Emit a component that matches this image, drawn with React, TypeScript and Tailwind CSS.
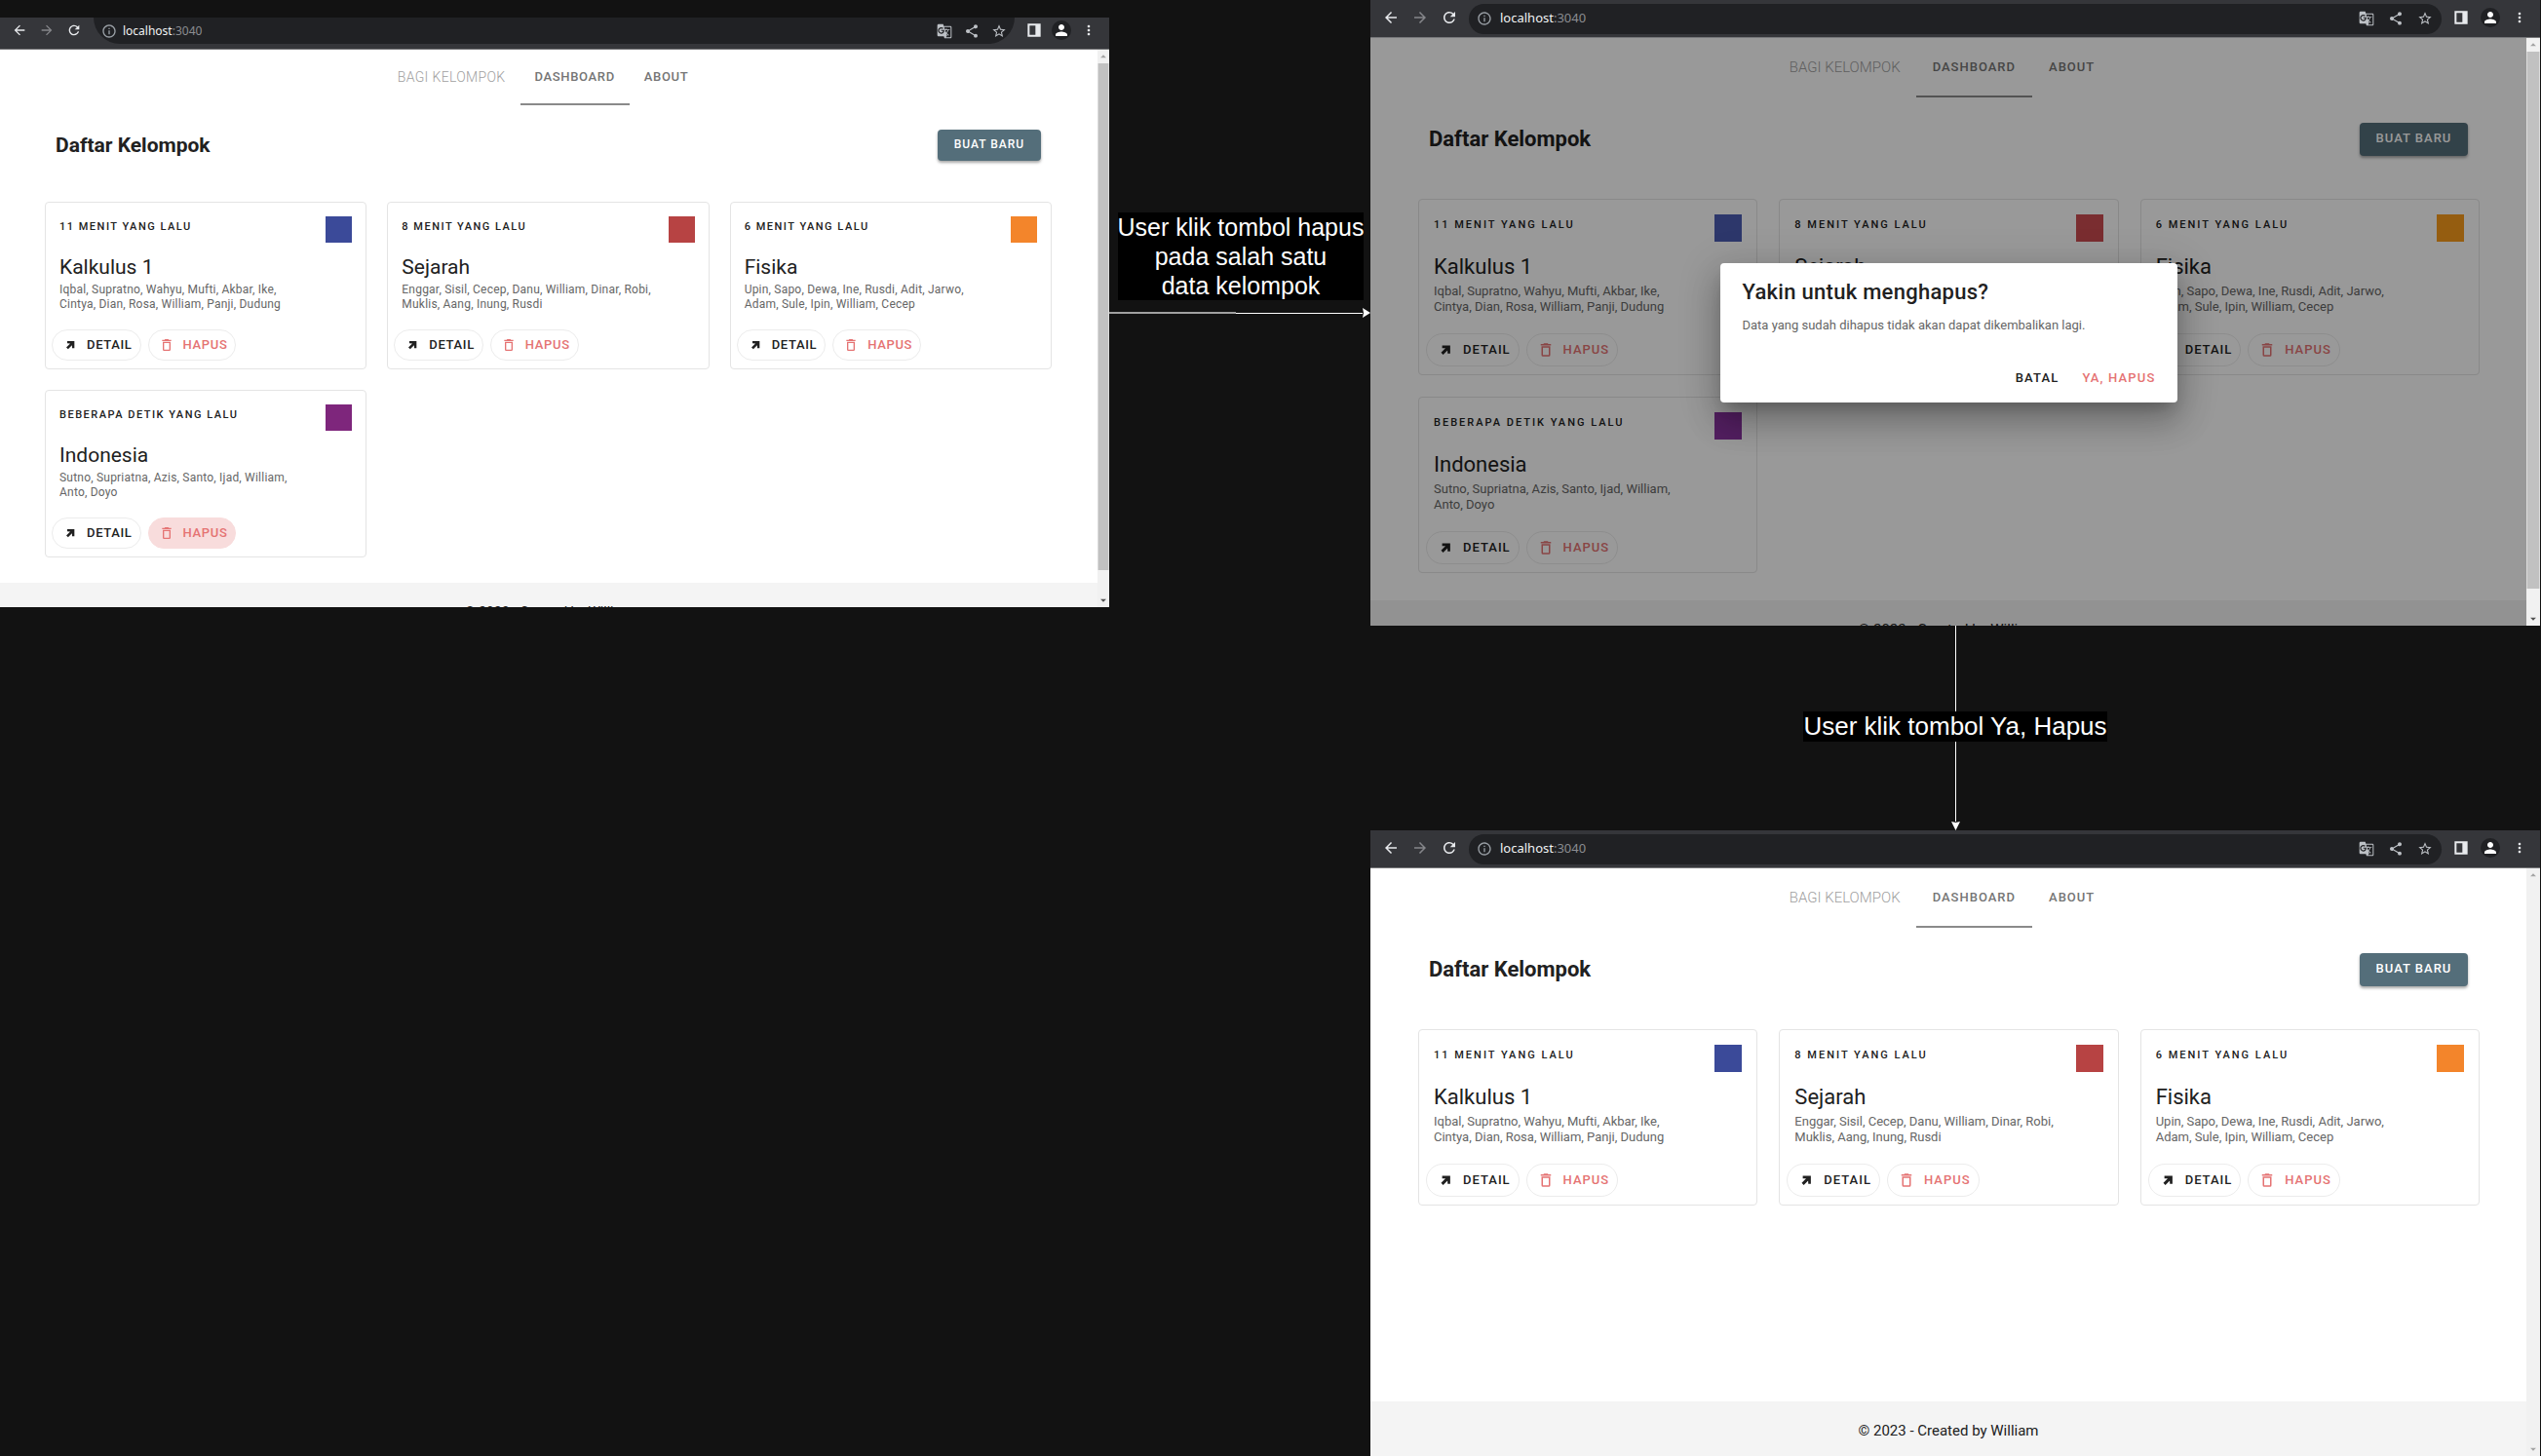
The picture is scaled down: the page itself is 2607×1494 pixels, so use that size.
import React from "react";
import {
  MdArrowBack,
  MdArrowForward,
  MdRefresh,
  MdInfoOutline,
  MdGTranslate,
  MdShare,
  MdStarBorder,
  MdPerson,
  MdMoreVert,
  MdArrowDropUp,
  MdArrowDropDown,
} from "react-icons/md";

type Size = "sm" | "lg";

type Group = {
  time: string;
  name: string;
  members: string[];
  swatch: string;
  dimSwatch: string;
};

const groups: Group[] = [
  {
    time: "11 MENIT YANG LALU",
    name: "Kalkulus 1",
    members: ["Iqbal, Supratno, Wahyu, Mufti, Akbar, Ike,", "Cintya, Dian, Rosa, William, Panji, Dudung"],
    swatch: "bg-[#3b4a99]",
    dimSwatch: "bg-[#4b5cb2]",
  },
  {
    time: "8 MENIT YANG LALU",
    name: "Sejarah",
    members: ["Enggar, Sisil, Cecep, Danu, William, Dinar, Robi,", "Muklis, Aang, Inung, Rusdi"],
    swatch: "bg-[#b74343]",
    dimSwatch: "bg-[#cb4b50]",
  },
  {
    time: "6 MENIT YANG LALU",
    name: "Fisika",
    members: ["Upin, Sapo, Dewa, Ine, Rusdi, Adit, Jarwo,", "Adam, Sule, Ipin, William, Cecep"],
    swatch: "bg-[#f3852b]",
    dimSwatch: "bg-[#f89b1b]",
  },
  {
    time: "BEBERAPA DETIK YANG LALU",
    name: "Indonesia",
    members: ["Sutno, Supriatna, Azis, Santo, Ijad, William,", "Anto, Doyo"],
    swatch: "bg-[#7e267c]",
    dimSwatch: "bg-[#8a34a2]",
  },
];

const styles = {
  sm: {
    toolbar: "h-[33px] pb-[5px]",
    navGroup: "w-24 gap-3 pl-3",
    navIcon: "size-4",
    pill: "h-[27px] rounded-b-full rounded-t-xl pl-2 pr-2",
    url: "ml-[6px] text-[12px]",
    pillIcons: "gap-3",
    tools: "pl-3 pr-[13px] gap-[10px]",
    scroll: "w-3",
    tabs: "h-[57px] pr-3",
    tabDisabled: "text-[14px] px-[15px] tracking-wide",
    tab: "text-[13px] px-[15px] tracking-wider",
    head: "pl-[57px] pr-[58px] pt-[25px] pb-[42px]",
    title: "text-[21px] leading-8",
    create: "h-8 w-[106px] text-[12px]",
    grid: "pl-[46px] pr-[47px] gap-[21px]",
    card: "h-[172px] px-[14px]",
    swatch: "mt-[14px] size-[27px]",
    time: "text-[11px] leading-[50px] tracking-[1.5px]",
    name: "text-[21px] leading-8",
    members: "text-[12px] leading-[15px] tracking-[0.0178em]",
    actions: "-ml-2 mt-[18px] gap-[7px]",
    action: "h-8 pl-[10px] pr-2 text-[13px] gap-[9px] tracking-wider",
    actionIcon: "size-4",
    footer: "mt-[26px] pt-2 text-[14px] h-[52px]",
  },
  lg: {
    toolbar: "h-[39px]",
    navGroup: "w-[101px] gap-3 pl-3",
    navIcon: "size-[18px]",
    pill: "h-[31px] rounded-full pl-2 pr-[9px]",
    url: "ml-2 text-[13px]",
    pillIcons: "gap-[14px]",
    tools: "pl-3 pr-[13px] gap-3",
    scroll: "w-[14px]",
    tabs: "h-[61px] pr-3",
    tabDisabled: "text-[15px] px-4",
    tab: "text-[13px] px-[17px] tracking-[1px]",
    head: "px-[60px] pt-[26px] pb-11",
    title: "text-[22px] leading-[34px]",
    create: "h-[34px] w-[111px] text-[13px]",
    grid: "pl-[49px] pr-12 gap-[22px]",
    card: "h-[181px] px-[15px]",
    swatch: "mt-[15px] size-7",
    time: "text-[11px] leading-[52px] tracking-[2px]",
    name: "text-[22px] leading-[34px]",
    members: "text-[13px] leading-4",
    actions: "-ml-2 mt-[19px] gap-[7px]",
    action: "h-[34px] pl-[10px] pr-2 text-[13px] gap-[9px] tracking-[1px]",
    actionIcon: "size-[18px]",
    footer: "mt-7 pt-1 text-[15px] h-14",
  },
};

function TrashIcon({ className }: { className: string }) {
  return (
    <svg viewBox="0 0 24 24" fill="currentColor" className={className} aria-hidden="true">
      <path d="M6 19a2 2 0 0 0 2 2h8a2 2 0 0 0 2-2V7H6v12ZM8 9h8v10H8V9Zm7.5-5-1-1h-5l-1 1H5v2h14V4h-3.5Z" />
    </svg>
  );
}

function ArrowIcon({ className }: { className: string }) {
  return (
    <svg viewBox="0 0 24 24" fill="currentColor" className={className} aria-hidden="true">
      <path d="M7.500 6v3.500l4.500.2L6 15.700 8.800 18.500l6-6L15 17h3.500V6H7.500Z" />
    </svg>
  );
}

function PanelIcon({ className }: { className: string }) {
  return (
    <svg viewBox="0 0 24 24" fill="currentColor" className={className} aria-hidden="true">
      <path d="M2 2h20v20H2V2Zm3 3v14h9V5H5Z" fillRule="evenodd" />
    </svg>
  );
}

function Toolbar({ size }: { size: Size }) {
  const s = styles[size];
  return (
    <div className={`flex shrink-0 items-center border-b border-[#77787a] bg-[#35363a] text-[#e8eaed] ${s.toolbar}`}>
      <div className={`mb-[2px] flex shrink-0 items-center ${s.navGroup}`}>
        <button aria-label="Kembali"><MdArrowBack className={s.navIcon} /></button>
        <button aria-label="Maju" className="text-[#85868a]"><MdArrowForward className={s.navIcon} /></button>
        <button aria-label="Muat ulang"><MdRefresh className={s.navIcon} /></button>
      </div>
      <div className={`flex min-w-0 flex-1 items-center bg-[#202124] text-[#bdc1c6] ${s.pill}`}>
        <MdInfoOutline className="size-4 text-[#9aa0a6]" />
        <span className={`flex-1 font-['Noto_Sans',sans-serif] text-[#8b8d91] ${s.url}`}>
          <span className="text-[#f1f3f4]">localhost</span>:3040
        </span>
        <div className={`flex items-center ${s.pillIcons}`}>
          <button aria-label="Terjemahkan"><MdGTranslate className="size-4" /></button>
          <button aria-label="Bagikan"><MdShare className="size-4" /></button>
          <button aria-label="Bookmark"><MdStarBorder className="size-4" /></button>
        </div>
      </div>
      <div className={`mb-[2px] flex shrink-0 items-center ${s.tools}`}>
        <button aria-label="Panel samping"><PanelIcon className="size-4" /></button>
        <button aria-label="Profil" className="flex size-5 items-center justify-center rounded-full bg-[#202124] text-white">
          <MdPerson className="size-[18px]" />
        </button>
        <button aria-label="Menu"><MdMoreVert className="size-4" /></button>
      </div>
    </div>
  );
}

function GroupCard({ group, size, dim, hovered }: { group: Group; size: Size; dim: boolean; hovered: boolean }) {
  const s = styles[size];
  return (
    <article className={`rounded-[4px] border border-[#e4e4e4] ${s.card}`}>
      <div className="flex items-start justify-between">
        <p className={`font-medium whitespace-nowrap ${s.time}`}>{group.time}</p>
        <div className={`${s.swatch} ${dim ? group.dimSwatch : group.swatch}`} />
      </div>
      <h2 className={s.name}>{group.name}</h2>
      <p className={`whitespace-nowrap text-[#666] ${s.members}`}>
        {group.members[0]}
        <br />
        {group.members[1]}
      </p>
      <div className={`flex ${s.actions}`}>
        <button className={`flex items-center rounded-full border border-[#ececec] font-medium ${s.action}`}>
          <ArrowIcon className={s.actionIcon} />
          DETAIL
        </button>
        <button
          className={`flex items-center rounded-full border font-medium text-[#e57373] ${s.action} ${
            hovered ? "border-[#f8dcdc] bg-[#f8dcdc]" : "border-[#ececec]"
          }`}
        >
          <TrashIcon className={s.actionIcon} />
          HAPUS
        </button>
      </div>
    </article>
  );
}

function ConfirmDialog() {
  return (
    <div className="absolute inset-0 flex items-start justify-center bg-black/40 pt-[231px]">
      <div
        role="dialog"
        aria-label="Yakin untuk menghapus?"
        className="flex h-[143px] w-[469px] flex-col rounded-[4px] bg-white pr-[14px] pl-[23px] shadow-[0_10px_14px_-6px_rgba(0,0,0,0.2),0_20px_34px_2px_rgba(0,0,0,0.2),0_8px_40px_7px_rgba(0,0,0,0.12)]"
      >
        <h2 className="pt-[14px] text-[22px] leading-8 font-medium tracking-[0.0125em]">Yakin untuk menghapus?</h2>
        <p className="pt-2 text-[13px] leading-5 text-[#666]">
          Data yang sudah dihapus tidak akan dapat dikembalikan lagi.
        </p>
        <div className="mt-7 flex justify-end gap-2 text-[13px] leading-8 font-medium tracking-[0.0893em]">
          <button className="px-2">BATAL</button>
          <button className="px-2 text-[#e57373]">YA, HAPUS</button>
        </div>
      </div>
    </div>
  );
}

function Scrollbar({ size, thumb }: { size: Size; thumb: boolean }) {
  return (
    <div className={`flex shrink-0 flex-col items-center bg-[#f1f1f1] ${styles[size].scroll}`}>
      <MdArrowDropUp className="size-[14px] shrink-0 text-[#a3a3a3]" />
      <div className={thumb ? "w-full flex-1 border-x border-[#dcdcdc] bg-[#c1c1c1]" : "flex-1"} />
      {thumb && <div className="h-6 shrink-0" />}
      <MdArrowDropDown className={`size-[14px] shrink-0 ${thumb ? "text-[#505050]" : "text-[#a3a3a3]"}`} />
    </div>
  );
}

function BrowserWindow({
  size,
  items,
  className,
  hovered,
  dialog = false,
  thumb = false,
}: {
  size: Size;
  items: Group[];
  className: string;
  hovered?: string;
  dialog?: boolean;
  thumb?: boolean;
}) {
  const s = styles[size];
  return (
    <section className={`flex flex-col overflow-hidden bg-white ${className}`}>
      <Toolbar size={size} />
      <div className="flex min-h-0 flex-1">
        <div className="relative flex min-w-0 flex-1 flex-col overflow-hidden font-[Roboto,sans-serif] text-[#212121]">
          <nav className={`flex shrink-0 items-stretch justify-center font-medium ${s.tabs}`}>
            <a href="#bagi" className={`flex items-center font-light text-[#a0a0a0] ${s.tabDisabled}`}>BAGI KELOMPOK</a>
            <a href="#dashboard" className={`flex items-center border-b-2 border-[#8a8a8a] text-[#757575] ${s.tab}`}>
              DASHBOARD
            </a>
            <a href="#about" className={`flex items-center pb-[2px] text-[#757575] ${s.tab}`}>ABOUT</a>
          </nav>
          <header className={`flex shrink-0 items-center justify-between ${s.head}`}>
            <h1 className={`font-bold ${s.title}`}>Daftar Kelompok</h1>
            <button
              className={`rounded-[4px] bg-[#546e7a] pb-[2px] font-medium tracking-[1px] text-white shadow-[0_2px_3px_rgba(0,0,0,0.35)] ${s.create}`}
            >
              BUAT BARU
            </button>
          </header>
          <main className={`grid shrink-0 grid-cols-3 ${s.grid}`}>
            {items.map((g) => (
              <GroupCard key={g.name} group={g} size={size} dim={dialog} hovered={hovered === g.name} />
            ))}
          </main>
          {items.length < 4 && <div className="flex-1" />}
          <footer className={`flex shrink-0 items-center justify-center bg-[#f4f4f4] ${s.footer}`}>
            © 2023 - Created by William
          </footer>
          {dialog && <ConfirmDialog />}
        </div>
        <Scrollbar size={size} thumb={thumb} />
      </div>
    </section>
  );
}

export default function App() {
  return (
    <div className="grid min-h-screen grid-cols-[1138fr_268fr_1200fr] content-start bg-[#121212] pr-px font-['Liberation_Sans',sans-serif] text-white">
      <BrowserWindow size="sm" items={groups} hovered="Indonesia" thumb className="mt-[18px] h-[605px]" />

      <div className="flex flex-col items-center pt-[218px]">
        <p className="ml-[2px] bg-black text-center text-[25px] leading-[30px] whitespace-nowrap">
          User klik tombol hapus
          <br />
          pada salah satu
          <br />
          data kelompok
        </p>
        <div className="mt-2 flex w-full items-center">
          <div className="h-[2px] flex-1 bg-[#a0a0a0]" />
          <div className="h-px flex-1 bg-white" />
          <svg viewBox="0 0 8 10" className="h-[10px] w-2" fill="white" aria-hidden="true">
            <path d="M0 0 8 5 0 10 1 5Z" />
          </svg>
        </div>
      </div>

      <BrowserWindow size="lg" items={groups} dialog thumb className="h-[642px]" />

      <div className="col-start-3 flex h-[210px] flex-col items-center">
        <div className="h-[88px] w-px bg-white" />
        <p className="bg-black text-[26px] leading-[31px] whitespace-nowrap">User klik tombol Ya, Hapus</p>
        <div className="w-px flex-1 bg-white" />
        <svg viewBox="0 0 9 9" className="size-[9px]" fill="white" aria-hidden="true">
          <path d="M0 0 4.500 9 9 0 4.500 1Z" />
        </svg>
      </div>

      <BrowserWindow size="lg" items={groups.slice(0, 3)} className="col-start-3 h-[642px]" />
    </div>
  );
}
